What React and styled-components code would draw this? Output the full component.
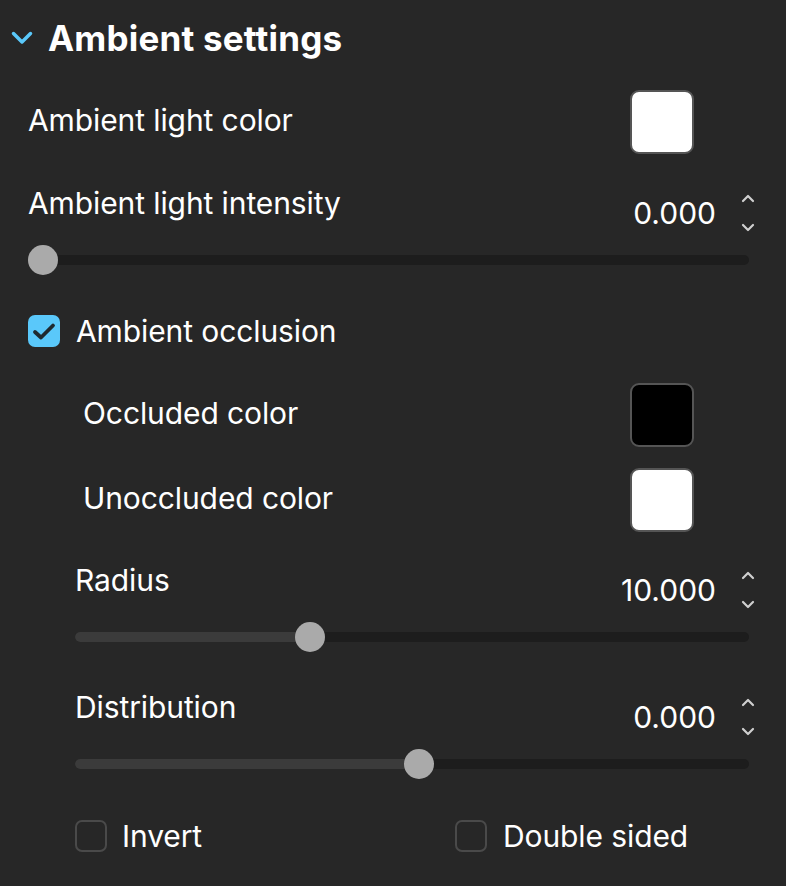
import React from "react";
import styled, { createGlobalStyle } from "styled-components";

const Global = createGlobalStyle`
  html, body { margin: 0; padding: 0; background: #272727; }
  body { font-family: Inter, "Noto Sans", "Liberation Sans", sans-serif; color: #ffffff; }
`;

const Panel = styled.div`
  width: 786px;
  height: 886px;
  box-sizing: border-box;
  padding: 0 26px 0 11px;
  display: flex;
  flex-direction: column;
  background: #272727;
`;

const Header = styled.div`
  height: 76px;
  display: flex;
  align-items: center;
  gap: 15px;
`;

const Title = styled.h2`
  margin: 0;
  font-size: 35px;
  font-weight: 700;
  letter-spacing: 0.2px;
  color: #ffffff;
`;

const Body = styled.div`
  display: flex;
  flex-direction: column;
  padding-left: 17px;
`;

const Label = styled.span`
  font-size: 30px;
  line-height: 36px;
  letter-spacing: -0.1px;
  color: #ffffff;
  white-space: nowrap;
`;

const ColorLabel = styled(Label)`
  padding-bottom: 5px;
`;

const ColorRow = styled.div`
  display: flex;
  align-items: center;
  justify-content: space-between;
  height: 64px;
  margin-top: ${(p) => p.$mt}px;
  padding-left: ${(p) => p.$indent || 0}px;
`;

const Swatch = styled.div`
  width: 64px;
  height: 64px;
  box-sizing: border-box;
  border: 2px solid #555555;
  border-radius: 9px;
  background: ${(p) => p.$color};
  margin-right: 66px;
`;

const Field = styled.div`
  display: flex;
  flex-direction: column;
  margin-top: ${(p) => p.$mt}px;
  padding-left: ${(p) => p.$indent || 0}px;
`;

const FieldTop = styled.div`
  display: flex;
  justify-content: space-between;
  height: 56px;
`;

const TopLabel = styled(Label)`
  align-self: flex-start;
`;

const ValueGroup = styled.div`
  display: flex;
  align-items: center;
  gap: 20px;
`;

const Value = styled.span`
  font-size: 30px;
  line-height: 36px;
  color: #ffffff;
`;

const Spinner = styled.div`
  width: 24px;
  height: 40px;
  display: flex;
  flex-direction: column;
  justify-content: space-between;
  align-items: center;
`;

const Slider = styled.div`
  position: relative;
  height: 30px;
  margin-top: 4px;
  margin-right: 11px;
`;

const Track = styled.div`
  position: absolute;
  left: 0;
  right: 0;
  top: 10px;
  height: 10px;
  border-radius: 5px;
  background: #1d1d1d;
`;

const Fill = styled.div`
  position: absolute;
  left: 0;
  top: 10px;
  height: 10px;
  border-radius: 5px;
  background: #3b3b3b;
`;

const Thumb = styled.div`
  position: absolute;
  top: 0;
  width: 30px;
  height: 30px;
  border-radius: 50%;
  background: #aaaaaa;
`;

const CheckRow = styled.label`
  display: flex;
  align-items: center;
  gap: ${(p) => p.$gap || 16}px;
  height: 32px;
  margin-top: ${(p) => p.$mt || 0}px;
`;

const Box = styled.span`
  width: 32px;
  height: 32px;
  box-sizing: border-box;
  border-radius: 7px;
  display: flex;
  align-items: center;
  justify-content: center;
  background: ${(p) => (p.$checked ? "#5ac8fa" : "transparent")};
  border: ${(p) => (p.$checked ? "none" : "2px solid #4a4a4a")};
`;

const CheckGrid = styled.div`
  display: grid;
  grid-template-columns: 380px 1fr;
  margin-top: ${(p) => p.$mt}px;
  padding-left: 47px;
`;

const Chevron = () => (
  <svg width="22" height="14" viewBox="0 0 22 14">
    <polyline points="2.5,2.5 11,11 19.5,2.5" fill="none" stroke="#5ac8fa" strokeWidth="3.5" strokeLinecap="round" strokeLinejoin="round" />
  </svg>
);

const Arrow = ({ up }) => (
  <svg width="14" height="10" viewBox="0 0 14 10">
    <polyline
      points={up ? "2,8 7,3 12,8" : "2,2 7,7 12,2"}
      fill="none"
      stroke="#cfcfcf"
      strokeWidth="2.2"
      strokeLinecap="round"
      strokeLinejoin="round"
    />
  </svg>
);

const Check = () => (
  <svg width="32" height="32" viewBox="0 0 32 32">
    <polyline points="7,17 13,22.5 25,10.5" fill="none" stroke="#1f2a30" strokeWidth="3.8" strokeLinecap="round" strokeLinejoin="round" />
  </svg>
);

const Checkbox = ({ checked, label, mt, gap }) => (
  <CheckRow $mt={mt} $gap={gap}>
    <Box $checked={checked}>{checked && <Check />}</Box>
    <Label>{label}</Label>
  </CheckRow>
);

const NumberField = ({ label, value, pct, mt, indent }) => (
  <Field $mt={mt} $indent={indent}>
    <FieldTop>
      <TopLabel>{label}</TopLabel>
      <ValueGroup>
        <Value>{value}</Value>
        <Spinner>
          <Arrow up />
          <Arrow />
        </Spinner>
      </ValueGroup>
    </FieldTop>
    <Slider>
      <Track />
      <Fill style={{ width: `calc(${pct} * (100% - 30px) + 15px)` }} />
      <Thumb style={{ left: `calc(${pct} * (100% - 30px))` }} />
    </Slider>
  </Field>
);

export default function App() {
  return (
    <>
      <Global />
      <Panel>
        <Header>
          <Chevron />
          <Title>Ambient settings</Title>
        </Header>
        <Body>
          <ColorRow $mt={14}>
            <ColorLabel>Ambient light color</ColorLabel>
            <Swatch $color="#ffffff" />
          </ColorRow>
          <NumberField label="Ambient light intensity" value="0.000" pct={0} mt={31} />
          <Checkbox checked label="Ambient occlusion" mt={40} />
          <ColorRow $mt={36} $indent={55}>
            <ColorLabel>Occluded color</ColorLabel>
            <Swatch $color="#000000" />
          </ColorRow>
          <ColorRow $mt={21} $indent={55}>
            <ColorLabel>Unoccluded color</ColorLabel>
            <Swatch $color="#ffffff" />
          </ColorRow>
          <NumberField label="Radius" value="10.000" pct={0.342} mt={30} indent={47} />
          <NumberField label="Distribution" value="0.000" pct={0.511} mt={37} indent={47} />
          <CheckGrid $mt={41}>
            <Checkbox label="Invert" gap={15} />
            <Checkbox label="Double sided" gap={16} />
          </CheckGrid>
        </Body>
      </Panel>
    </>
  );
}
